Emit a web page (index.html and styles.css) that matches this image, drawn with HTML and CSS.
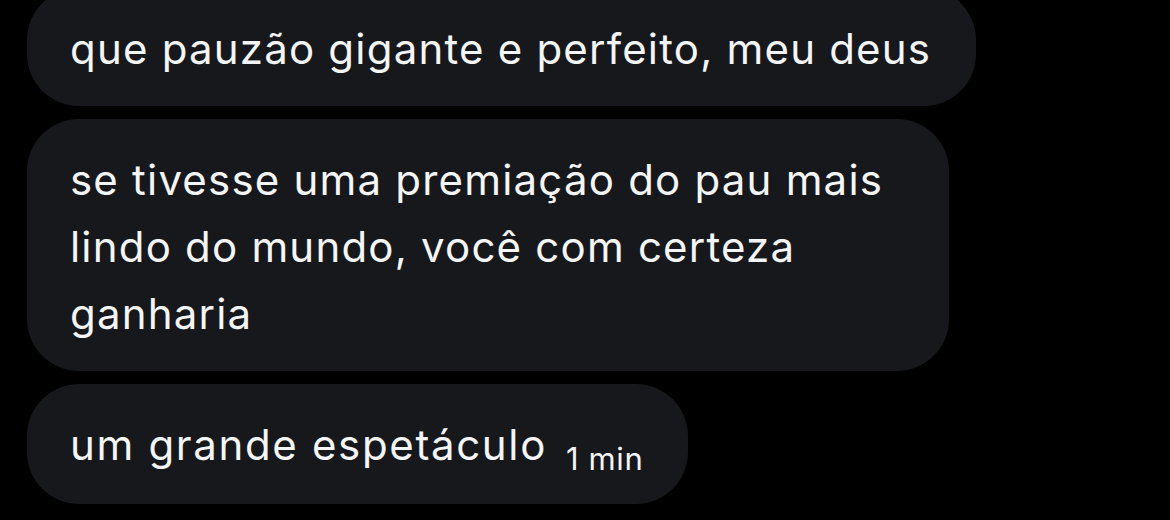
FILE: index.html
```html
<!DOCTYPE html>
<html lang="pt">
<head>
<meta charset="utf-8">
<title>Mensagens</title>
<link rel="stylesheet" href="styles.css">
</head>
<body>
<main class="thread">
  <div class="bubble"><span class="text">que pauzão gigante e perfeito, meu deus</span></div>
  <div class="bubble bubble-wide"><span class="text">se tivesse uma premiação do pau mais<br>lindo do mundo, você com certeza<br>ganharia</span></div>
  <div class="bubble bubble-last"><span class="text text-last">um grande espetáculo</span><span class="time">1 min</span></div>
</main>
</body>
</html>
```

FILE: styles.css
```css
html, body {
  margin: 0;
  padding: 0;
  background: #000;
}

body {
  width: 1170px;
  height: 520px;
  overflow: hidden;
  font-family: Inter, "Noto Sans", sans-serif;
  color: #f4f5f6;
}

.thread {
  display: flex;
  flex-direction: column;
  align-items: flex-start;
  gap: 13px;
  margin-top: -12px;
  padding-left: 27px;
}

.bubble {
  background: #16181b;
  border-radius: 52px;
  padding: 27px 45px 24px 43px;
  font-size: 42px;
  letter-spacing: 1.2px;
  line-height: 67px;
  white-space: nowrap;
}

.bubble-wide {
  padding-right: 66px;
}

.bubble-last {
  padding-bottom: 22px;
}

.text-last {
  letter-spacing: 1.65px;
  margin-right: 19px;
}

.time {
  font-size: 31px;
  letter-spacing: 0.6px;
  position: relative;
  top: 10px;
}
```
